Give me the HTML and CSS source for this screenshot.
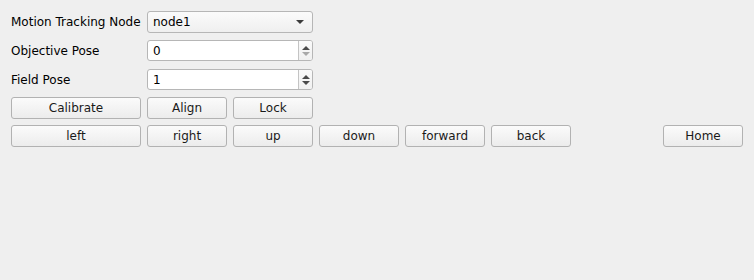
FILE: index.html
```html
<!DOCTYPE html>
<html lang="en">
<head>
    <meta charset="UTF-8">
    <title>Motion Tracking</title>
    <link rel="stylesheet" href="styles.css">
</head>
<body>
    <div class="panel">
        <!-- node selection -->
        <label class="label row1">Motion Tracking Node</label>
        <div class="combo row1">
            <span>node1</span>
            <span class="combo-arrow"></span>
        </div>

        <label class="label row2">Objective Pose</label>
        <div class="spin row2">
            <span class="spin-value">0</span>
            <span class="spin-buttons">
                <span class="arrow-up"></span>
                <span class="arrow-down disabled"></span>
            </span>
        </div>

        <label class="label row3">Field Pose</label>
        <div class="spin row3">
            <span class="spin-value">1</span>
            <span class="spin-buttons">
                <span class="arrow-up"></span>
                <span class="arrow-down"></span>
            </span>
        </div>

        <!-- actions -->
        <button class="btn row4 col1">Calibrate</button>
        <button class="btn row4 col2">Align</button>
        <button class="btn row4 col3">Lock</button>

        <button class="btn row5 col1">left</button>
        <button class="btn row5 col2">right</button>
        <button class="btn row5 col3">up</button>
        <button class="btn row5 col4">down</button>
        <button class="btn row5 col5">forward</button>
        <button class="btn row5 col6">back</button>
        <button class="btn row5 col8">Home</button>
    </div>
</body>
</html>
```

FILE: styles.css
```css
html, body {
    margin: 0;
    background-color: #efefef;
}
body {
    font-family: "DejaVu Sans", sans-serif;
    font-size: 12px;
    color: #000;
    width: 754px;
    height: 280px;
}
.panel {
    padding: 11px 11px 0 11px;
    display: grid;
    grid-template-columns: 130px 80px 80px 80px 80px 80px 1fr 80px;
    grid-template-rows: 29px 29px 28px 28px 22px;
    column-gap: 6px;
    align-items: start;
}
.row1 { grid-row: 1; }
.row2 { grid-row: 2; }
.row3 { grid-row: 3; }
.row4 { grid-row: 4; }
.row5 { grid-row: 5; }
.col1 { grid-column: 1; }
.col2 { grid-column: 2; }
.col3 { grid-column: 3; }
.col4 { grid-column: 4; }
.col5 { grid-column: 5; }
.col6 { grid-column: 6; }
.col8 { grid-column: 8; }

.label {
    grid-column: 1;
    height: 22px;
    line-height: 22px;
    white-space: nowrap;
}
.row2.label, .row3.label {
    height: 21px;
    line-height: 23px;
}

.combo {
    grid-column: 2 / span 2;
    height: 22px;
    box-sizing: border-box;
    border: 1px solid #b6b6b6;
    border-radius: 3px;
    background: linear-gradient(#fbfbfb, #efefef);
    display: flex;
    align-items: center;
    justify-content: space-between;
    padding: 0 8px 0 5px;
}
.combo-arrow {
    width: 0;
    height: 0;
    border-left: 4px solid transparent;
    border-right: 4px solid transparent;
    border-top: 4px solid #3c3c3c;
}

.spin {
    grid-column: 2 / span 2;
    height: 21px;
    box-sizing: border-box;
    border: 1px solid #b6b6b6;
    border-radius: 3px;
    background: #fff;
    display: flex;
}
.spin-value {
    flex: 1;
    padding-left: 5px;
    line-height: 21px;
}
.spin-buttons {
    width: 13px;
    border-left: 1px solid #c4c4c4;
    background: linear-gradient(#fafafa, #f0f0f0);
    display: flex;
    flex-direction: column;
    align-items: center;
    justify-content: center;
    gap: 2px;
    border-radius: 0 2px 2px 0;
}
.arrow-up {
    width: 0;
    height: 0;
    border-left: 4px solid transparent;
    border-right: 4px solid transparent;
    border-bottom: 4px solid #4a4a4a;
}
.arrow-down {
    width: 0;
    height: 0;
    border-left: 4px solid transparent;
    border-right: 4px solid transparent;
    border-top: 4px solid #4a4a4a;
}
.arrow-down.disabled {
    border-top-color: #a8a8a8;
}

.btn {
    height: 22px;
    box-sizing: border-box;
    margin: 0;
    padding: 0;
    font-family: "DejaVu Sans", sans-serif;
    font-size: 12px;
    color: #1a1a1a;
    border: 1px solid #b2b2b2;
    border-radius: 3px;
    background: linear-gradient(#fbfbfb, #ececec);
    cursor: pointer;
}
```
